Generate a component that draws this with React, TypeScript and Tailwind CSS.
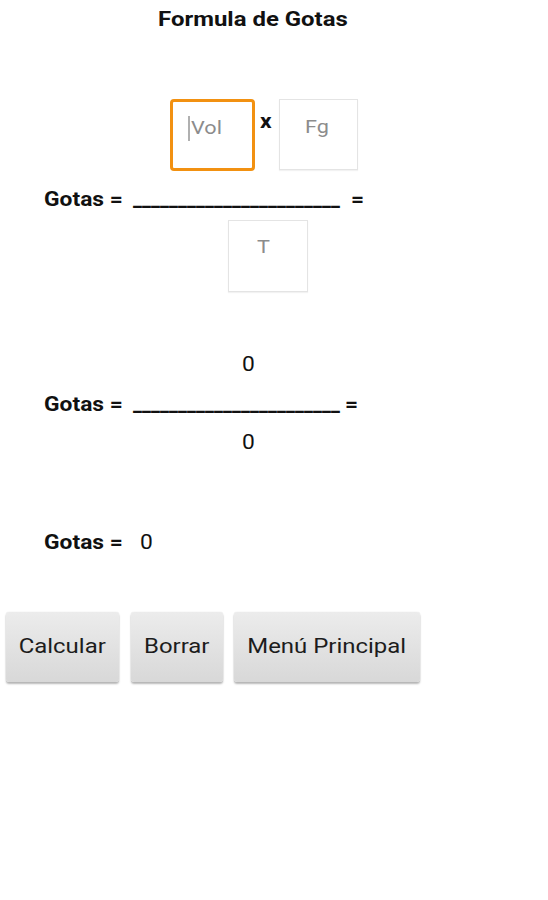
import React from "react";

const font = { fontFamily: "Roboto, 'Noto Sans', sans-serif" };

function Stretch({ children, className = "" }: { children: React.ReactNode; className?: string }) {
  return <span className={`inline-block origin-left scale-x-[1.14] whitespace-pre ${className}`}>{children}</span>;
}

function Hint({ children }: { children: React.ReactNode }) {
  return (
    <span className="inline-block origin-left scale-x-[1.14] text-[19px] leading-[22px] text-[#8c8c8c]">
      {children}
    </span>
  );
}

function Line({ eqGap }: { eqGap: string }) {
  return (
    <div className="pl-[44px] flex text-[20px] leading-[24px] font-bold text-[#111]">
      <div className="w-[89px]">
        <Stretch>Gotas =</Stretch>
      </div>
      <div className="w-[205px] whitespace-nowrap tracking-[0.1px]">_______________________</div>
      <div className={eqGap}>
        <Stretch>=</Stretch>
      </div>
    </div>
  );
}

function Btn({ children, w }: { children: React.ReactNode; w: string }) {
  return (
    <button
      className={`${w} h-[70px] rounded-[3px] bg-gradient-to-b from-[#ececec] to-[#d8d8d8] shadow-[0_2px_2px_rgba(0,0,0,0.28),0_0_1px_rgba(0,0,0,0.2)] text-[21px] text-[#1c1c1c] flex items-center justify-center`}
    >
      <span className="inline-block origin-center scale-x-[1.14] whitespace-pre">{children}</span>
    </button>
  );
}

export default function App() {
  return (
    <div className="w-[548px] h-[900px] bg-white text-[#111]" style={font}>
      <div className="pt-[7px] pl-[158px] text-[21px] leading-[25px] font-bold">
        <Stretch>Formula de Gotas</Stretch>
      </div>

      <div className="mt-[67px] flex items-start">
        <div className="ml-[170px] w-[85px] h-[72px] rounded-[4px] border-[3px] border-[#f29111] bg-white pt-[15px] pl-[18px] relative">
          <span className="absolute left-[15px] top-[14px] w-[2px] h-[25px] bg-[#b0b0b0]" />
          <Hint>Vol</Hint>
        </div>
        <div className="w-[24px] pl-[5px] mt-[10px] text-[20px] leading-[24px] font-bold">
          <Stretch>x</Stretch>
        </div>
        <div className="w-[79px] h-[71px] border border-[#e4e4e4] bg-white pt-[16px] pl-[25px] shadow-[0_1px_1px_rgba(0,0,0,0.05)]">
          <Hint>Fg</Hint>
        </div>
      </div>

      <div className="mt-[16px]">
        <Line eqGap="ml-[13px]" />
      </div>

      <div className="mt-[9px] ml-[228px] w-[80px] h-[72px] border border-[#e4e4e4] bg-white pt-[15px] pl-[28px] shadow-[0_1px_1px_rgba(0,0,0,0.05)]">
        <Hint>T</Hint>
      </div>

      <div className="mt-[60px] pl-[242px] text-[20px] leading-[24px]">
        <Stretch>0</Stretch>
      </div>
      <div className="mt-[16px]">
        <Line eqGap="ml-[7px]" />
      </div>
      <div className="mt-[14px] pl-[242px] text-[20px] leading-[24px]">
        <Stretch>0</Stretch>
      </div>

      <div className="mt-[76px] pl-[44px] flex text-[20px] leading-[24px]">
        <div className="w-[96px] font-bold">
          <Stretch>Gotas =</Stretch>
        </div>
        <Stretch>0</Stretch>
      </div>

      <div className="mt-[58px] pl-[6px] flex">
        <Btn w="w-[113px]">Calcular</Btn>
        <div className="w-[12px]" />
        <Btn w="w-[92px]">Borrar</Btn>
        <div className="w-[11px]" />
        <Btn w="w-[186px]">Menú Principal</Btn>
      </div>
    </div>
  );
}
